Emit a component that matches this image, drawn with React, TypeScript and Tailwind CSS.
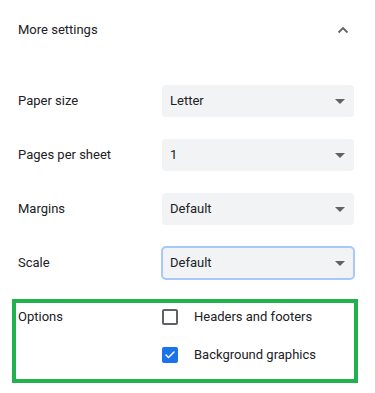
import { Check } from 'lucide-react';

const selects = [
  { label: 'Paper size', value: 'Letter' },
  { label: 'Pages per sheet', value: '1' },
  { label: 'Margins', value: 'Default' },
  { label: 'Scale', value: 'Default', focused: true },
];

function Caret() {
  return (
    <svg width="10" height="5" viewBox="0 0 10 5" className="shrink-0">
      <path d="M0 0h10L5 5z" fill="#5f6368" />
    </svg>
  );
}

export default function App() {
  return (
    <div className="w-[375px] h-[393px] bg-white text-[#202124] text-[13px] font-['Roboto',sans-serif]">
      <div className="h-[59px] flex items-center justify-between pl-[18px] pr-[26px]">
        <span>More settings</span>
        <svg width="12" height="8" viewBox="0 0 12 8">
          <path d="M1.5 6.5L6 2l4.5 4.5" fill="none" stroke="#5f6368" strokeWidth="1.8" />
        </svg>
      </div>

      <div className="flex flex-col gap-[22px] pt-[26px]">
        {selects.map((s) => (
          <div key={s.label} className="flex items-center h-[32px] pl-[18px]">
            <span className="w-[144px]">{s.label}</span>
            <div
              className={
                s.focused
                  ? 'w-[192px] h-[32px] rounded-[4px] bg-[#f1f3f4] flex items-center justify-between pl-[8px] pr-[9px] outline-2 outline-[#a8c7fa] outline-offset-[-1px]'
                  : 'w-[192px] h-[32px] rounded-[4px] bg-[#f1f3f4] flex items-center justify-between pl-[8px] pr-[9px]'
              }
            >
              <span>{s.value}</span>
              <Caret />
            </div>
          </div>
        ))}
      </div>

      <div className="ml-[12px] mr-[17px] mt-[20px] border-4 border-[#22b14c] pl-[2px] pt-[6px] pb-[16px]">
        <div className="flex">
          <span className="w-[144px] leading-[16px]">Options</span>
          <div className="flex flex-col gap-[22px]">
            <div className="flex items-center gap-[16px] h-[16px]">
              <div className="w-[16px] h-[16px] rounded-[2px] border-2 border-[#5f6368]" />
              <span>Headers and footers</span>
            </div>
            <div className="flex items-center gap-[16px] h-[16px]">
              <div className="w-[16px] h-[16px] rounded-[2px] bg-[#1a73e8] flex items-center justify-center">
                <Check size={12} color="white" strokeWidth={3} />
              </div>
              <span>Background graphics</span>
            </div>
          </div>
        </div>
      </div>
    </div>
  );
}
